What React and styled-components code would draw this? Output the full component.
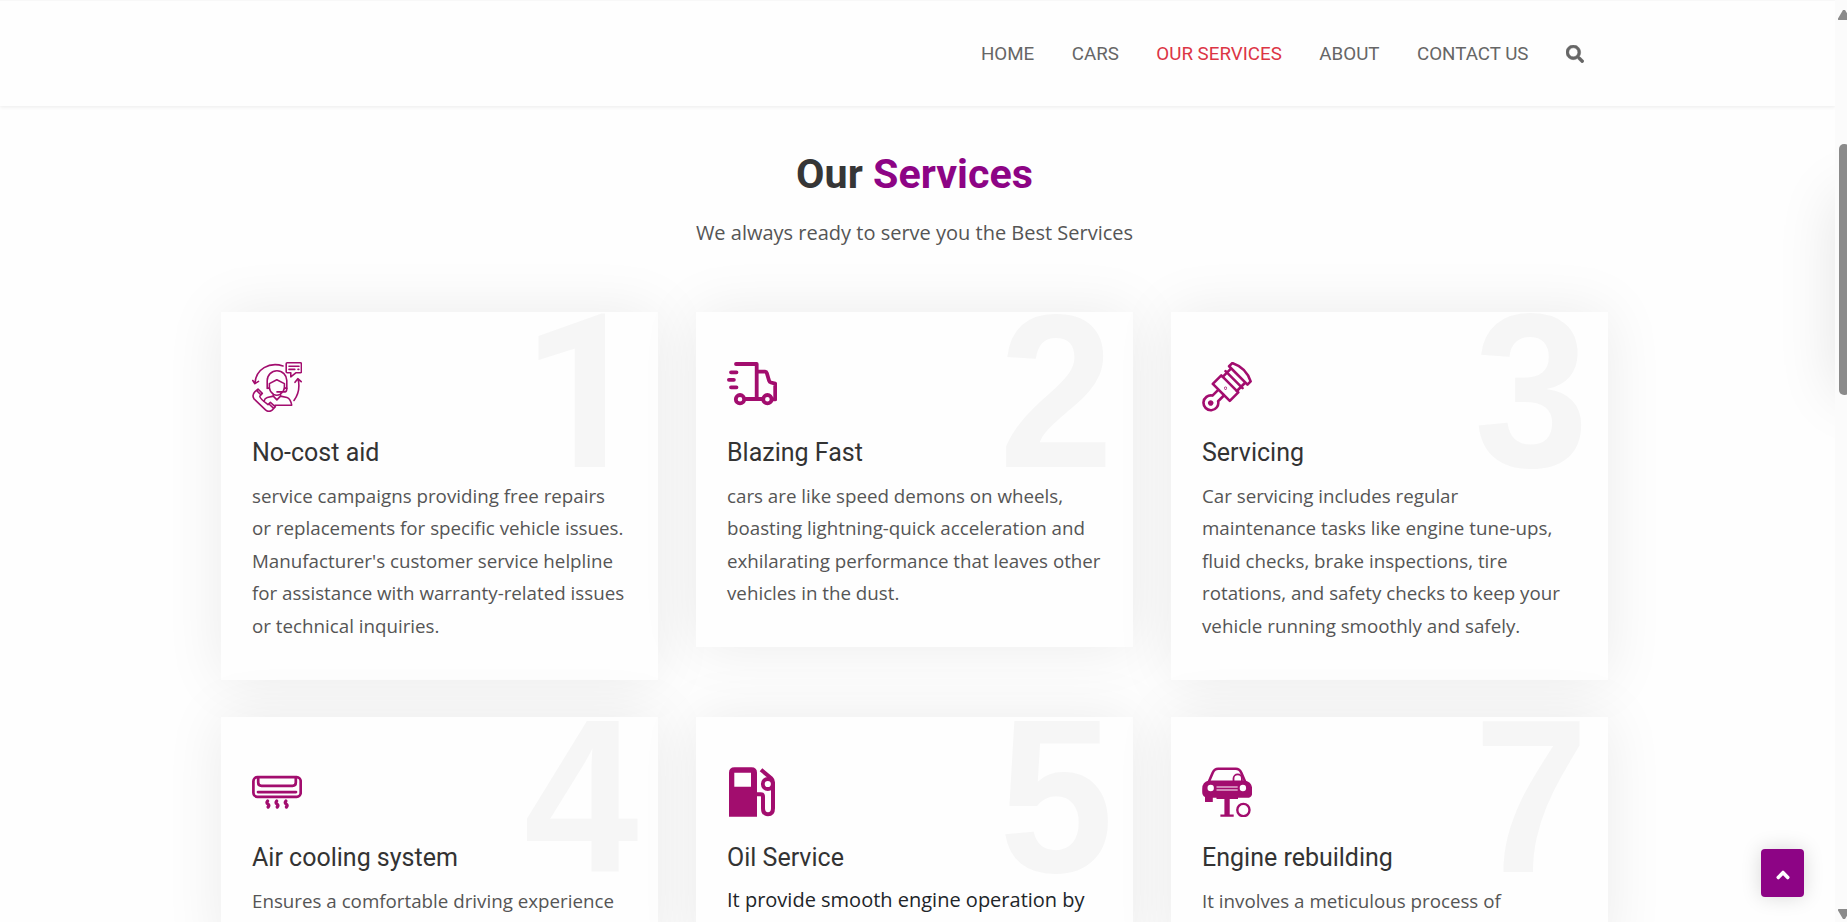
import React from 'react';
import styled, { createGlobalStyle } from 'styled-components';
import { FaSearch, FaChevronUp } from 'react-icons/fa';

const GlobalStyle = createGlobalStyle`
  *, *::before, *::after { box-sizing: border-box; }
  body { margin: 0; overflow: hidden; background: #fff; color: #212529; font-family: 'Open Sans', sans-serif; }
  h2, h3, p { margin: 0; }
`;

const Page = styled.div`
  position: relative;
  display: grid;
  grid-template-columns: 1fr 12px;
  height: 922px;
  overflow: hidden;
`;

const Content = styled.div`
  position: relative;
  height: 922px;
  overflow: hidden;
  background: #fefefe;
`;

const Header = styled.header`
  height: 106px;
  padding: 1px 251px 0 0;
  display: flex;
  align-items: center;
  justify-content: flex-end;
  border-top: 1px solid #f8f8f8;
  background: #fefefe;
  box-shadow: 0 1px 4px rgba(0, 0, 0, 0.08);
`;

const Nav = styled.nav`
  display: flex;
  align-items: center;
  gap: 37.5px;
`;

const NavLink = styled.a`
  font: 400 18.75px/28px Roboto, sans-serif;
  color: ${(p) => (p.$active ? '#dc3545' : '#666')};
  text-transform: uppercase;
`;

const SearchButton = styled.span`
  display: flex;
  color: #666;
  font-size: 18px;

  svg {
    stroke: currentColor;
    stroke-width: 14px;
  }
`;

const Services = styled.main`
  width: 1387px;
  margin-left: 221px;
  padding-top: 43px;
`;

const Heading = styled.h2`
  font: 700 41.25px/51px Roboto, sans-serif;
  color: #363636;
  text-align: center;
`;

const Accent = styled.span`
  color: #8d0485;
`;

const Intro = styled.p`
  margin-top: 17px;
  font-size: 20px;
  line-height: 32px;
  color: #555;
  text-align: center;
`;

const Grid = styled.div`
  margin-top: 63px;
  display: grid;
  grid-template-columns: repeat(3, 437px);
  gap: 37.5px 38px;
  align-items: start;
`;

const Card = styled.article`
  position: relative;
  padding: 50px 30px 37.5px 31px;
  background: #fefefe;
  box-shadow: 0 0 56px rgba(0, 0, 0, 0.08);
`;

const Numeral = styled.span`
  position: absolute;
  top: -30.5px;
  right: 19.5px;
  font: 700 206px/229px 'Liberation Sans', Arial, sans-serif;
  color: #f6f6f6;
  transform: scaleY(1.06);
  transform-origin: 0 185.5px;
`;

const SlimNumeral = styled(Numeral)`
  top: -33px;
  right: 14px;
  font: 700 214.5px/229px Roboto, sans-serif;
  transform: none;
`;

const Icon = styled.svg`
  position: relative;
  display: block;
  width: 50px;
  height: 50px;
  fill: none;
  stroke: #a20d6e;
  stroke-width: ${(p) => p.$weight};
  stroke-linecap: ${(p) => p.$cap || 'round'};
  stroke-linejoin: round;
`;

const Title = styled.h3`
  position: relative;
  margin-top: 25px;
  font: 400 25px/31px Roboto, sans-serif;
  color: #333;
`;

const Body = styled.p`
  position: relative;
  margin-top: ${(p) => (p.$plain ? '10.5px' : '11.5px')};
  font-size: ${(p) => (p.$plain ? '20px' : '18.75px')};
  line-height: 32.5px;
  color: ${(p) => (p.$plain ? '#212529' : '#555')};
  white-space: nowrap;
`;

const SidePanel = styled.div`
  position: absolute;
  left: 100%;
  top: 195px;
  width: 300px;
  height: 200px;
  box-shadow: 0 0 56px rgba(0, 0, 0, 0.1);
`;

const BackToTop = styled.button`
  position: absolute;
  left: 1761px;
  top: 849px;
  width: 43px;
  height: 48px;
  padding: 3px 0 0;
  display: flex;
  align-items: center;
  justify-content: center;
  border: 0;
  border-radius: 4px;
  background: #8d0485;
  color: #fff;
  font-size: 14px;
  box-shadow: 0 0 20px rgba(0, 0, 0, 0.15);

  svg {
    stroke: currentColor;
    stroke-width: 50px;
  }
`;

const Scrollbar = styled.div`
  height: 922px;
  padding: 10px 0 3px 3px;
  display: flex;
  flex-direction: column;
  justify-content: space-between;
  background: #fbfbfb;
  overflow: hidden;
`;

const Arrow = styled.svg`
  display: block;
  flex: none;
  width: 12px;
  height: 10px;
  fill: #8b8b8b;
`;

const Track = styled.div`
  flex: 1;
  padding: 124px 0 0 1px;
`;

const Thumb = styled.div`
  width: 11px;
  height: 251px;
  border-radius: 5px;
  background: #8b8b8b;
`;

const SupportIcon = () => (
  <Icon viewBox="0 0 50 50" $weight={1.6}>
    <path d="M35.2.8h13.2q1 0 1 1v8q0 1-1 1h-4.6l-5 4v-4h-3.6q-1 0-1-1v-8q0-1 1-1zM37 4.2h10M37 7.4h5.8M46 7.4h.8" />
    <path d="M31 3.9C17-.3 4 7 2.9 21.2M.8 18.5l2.1 3.2 3.6-2.3" />
    <path d="M42 38.5c4.5-6 6-13 4.1-21.5M43 20.3l2.8-3.6 3.4 3" />
    <path d="M15.2 26.5v-8a9.8 9.8 0 0 1 19.6 0v8M15.2 25.8l2.2.6v-4.8l7.4-3.9 7.6 3.9v4.8l2.4-.6" />
    <path d="M17.4 26q.5 4 4.2 6.4 3.2 1.8 6.3 0 3.9-2.4 4.5-6.4M25 29.9h8.3q1.5-.2 1.5-3.6" />
    <path d="M21.3 32.5v1.6l3.6 3.8 3.6-3.8v-1.6M21.3 34.1l-6 1.4q-2.6.8-3.3 3.7M28.5 34.1l6.5 1.4q3.5 1 4.7 7.7H23" />
    <path d="M3 29.6l3-2.6 4.3 4.4-2.5 2.8q-.4 2.1 8.2 8.4l2.4-2.2 5 4.4-3.3 3.3q-3.2 2.6-6.6-.2L2 36.8q-2.4-3.7 1-7.2zM4.5 28.4l4.3 4.3M17 42l4.7 4.4" />
  </Icon>
);

const TruckIcon = () => (
  <Icon viewBox="0 0 50 50" $weight={3.8}>
    <path d="M9 2h20.7v35M29.7 9.7h8.5q1.2 0 1.6 1.4l2.3 7.7q.4 1.4 1.8 1.7l4.3 1.1v15.8h-2M18.7 37h16M4 10.3h5.5M1.9 17.8h5M4 25.3h5.5" />
    <circle cx="13" cy="37.2" r="4.2" />
    <circle cx="40.4" cy="37.2" r="4.2" />
  </Icon>
);

const PistonIcon = () => (
  <Icon viewBox="0 0 50 50" $weight={2.6}>
    <g transform="translate(8.7 41) rotate(-45)">
      <circle r="1.4" />
      <path d="M6.5-4A7.4 7.4 0 1 0 6.5 4H15V-4zM15-12h12v24H15z" />
      <circle cx="21" r=".3" strokeWidth="2.4" />
      <path d="M27-10h12M27 10h12M33-12v24M39-13h4.5Q50 0 43.5 13H39z" />
    </g>
  </Icon>
);

const AirIcon = () => (
  <Icon viewBox="0 0 50 50" $weight={2.7}>
    <rect x="1.4" y="10.2" width="47.3" height="19.6" rx="4" />
    <path d="M6.2 11v4.5q0 3.3 3.3 3.3h31q3.3 0 3.3-3.3V11M6 25.1h38" />
    <path
      strokeWidth="3.3"
      d="M15.6 34q-1.5 1.7.3 3t.2 3M24.7 34q-1.5 1.7.3 3t.2 3M33.9 34q-1.5 1.7.3 3t.2 3"
    />
  </Icon>
);

const FuelIcon = () => (
  <Icon viewBox="0 0 50 50" $weight={4} $cap="butt">
    <path
      fill="#a20d6e"
      fillRule="evenodd"
      stroke="none"
      d="M7.5.3h17q5.5 0 5.5 5.5v43.9H2V5.8Q2 .3 7.5.3zM7.3 5.7v14H24v-14z"
    />
    <path d="M29 27.2h4.5q2.5 0 2.5 2.5v11.5q0 6 5 6t5-6V15.5q0-2.6-1.8-4.2L34 2.7" />
    <circle cx="40.8" cy="17" r="5" strokeWidth="3.8" />
  </Icon>
);

const LiftIcon = () => (
  <Icon viewBox="0 0 50 50" $weight={2.6} $cap="butt">
    <path d="M6.5 15.5l4.2-9.8q1.7-4 5.5-4h17.6q3.8 0 5.5 4l4.2 9.8" />
    <path d="M31.5 14v-2.5a4.2 4.2 0 0 1 8.4 0V14" strokeWidth="1.8" />
    <path
      fill="#a20d6e"
      stroke="none"
      d="M7 13.5h36q7.2 1.5 7.2 9v3q0 5.3-5 5.3H36V32h-8.3v15.5h4v2.2H18.4v-2.2h4V32H14.5v-1.2H10.8v4.3H3v-5Q.2 28.5.2 25v-3Q.2 14.5 7 13.5z"
    />
    <path stroke="#fff" strokeWidth="1.1" d="M14.5 20h21.2M14.5 23h21.2" />
    <circle cx="8.7" cy="21" r="3.2" fill="#fff" stroke="none" />
    <circle cx="40.9" cy="21" r="3.2" fill="#fff" stroke="none" />
    <circle cx="41.4" cy="43" r="6.1" strokeWidth="2.4" />
  </Icon>
);

const links = ['Home', 'Cars', 'Our Services', 'About', 'Contact Us'];

const services = [
  {
    n: 1,
    icon: SupportIcon,
    title: 'No-cost aid',
    lines: [
      'service campaigns providing free repairs',
      'or replacements for specific vehicle issues.',
      "Manufacturer's customer service helpline",
      'for assistance with warranty-related issues',
      'or technical inquiries.',
    ],
  },
  {
    n: 2,
    icon: TruckIcon,
    title: 'Blazing Fast',
    lines: [
      'cars are like speed demons on wheels,',
      'boasting lightning-quick acceleration and',
      'exhilarating performance that leaves other',
      'vehicles in the dust.',
    ],
  },
  {
    n: 3,
    icon: PistonIcon,
    title: 'Servicing',
    lines: [
      'Car servicing includes regular',
      'maintenance tasks like engine tune-ups,',
      'fluid checks, brake inspections, tire',
      'rotations, and safety checks to keep your',
      'vehicle running smoothly and safely.',
    ],
  },
  { n: 4, icon: AirIcon, title: 'Air cooling system', lines: ['Ensures a comfortable driving experience'] },
  { n: 5, icon: FuelIcon, title: 'Oil Service', plain: true, lines: ['It provide smooth engine operation by'] },
  { n: 7, icon: LiftIcon, title: 'Engine rebuilding', lines: ['It involves a meticulous process of'] },
];

function ServiceCard({ n, icon: Glyph, title, lines, plain }) {
  const Digit = n === 1 ? SlimNumeral : Numeral;
  return (
    <Card>
      <Digit>{n}</Digit>
      <Glyph />
      <Title>{title}</Title>
      <Body $plain={plain}>
        {lines.map((line) => (
          <React.Fragment key={line}>
            {line}
            <br />
          </React.Fragment>
        ))}
      </Body>
    </Card>
  );
}

export default function App() {
  return (
    <Page>
      <GlobalStyle />
      <Content>
        <Header>
          <Nav>
            {links.map((label) => (
              <NavLink key={label} $active={label === 'Our Services'}>
                {label}
              </NavLink>
            ))}
            <SearchButton>
              <FaSearch />
            </SearchButton>
          </Nav>
        </Header>
        <Services>
          <Heading>
            Our <Accent>Services</Accent>
          </Heading>
          <Intro>We always ready to serve you the Best Services</Intro>
          <Grid>
            {services.map((s) => (
              <ServiceCard key={s.n} {...s} />
            ))}
          </Grid>
        </Services>
        <SidePanel />
        <BackToTop aria-label="Back to top">
          <FaChevronUp />
        </BackToTop>
      </Content>
      <Scrollbar>
        <Arrow viewBox="0 0 12 10">
          <path d="M5 0h2l5 8q0 2-1 2H1Q-1 10 .3 8z" />
        </Arrow>
        <Track>
          <Thumb />
        </Track>
        <Arrow viewBox="0 0 12 10">
          <path d="M5 10h2l5-8q0-2-1-2H1Q-1 0 .3 2z" />
        </Arrow>
      </Scrollbar>
    </Page>
  );
}
